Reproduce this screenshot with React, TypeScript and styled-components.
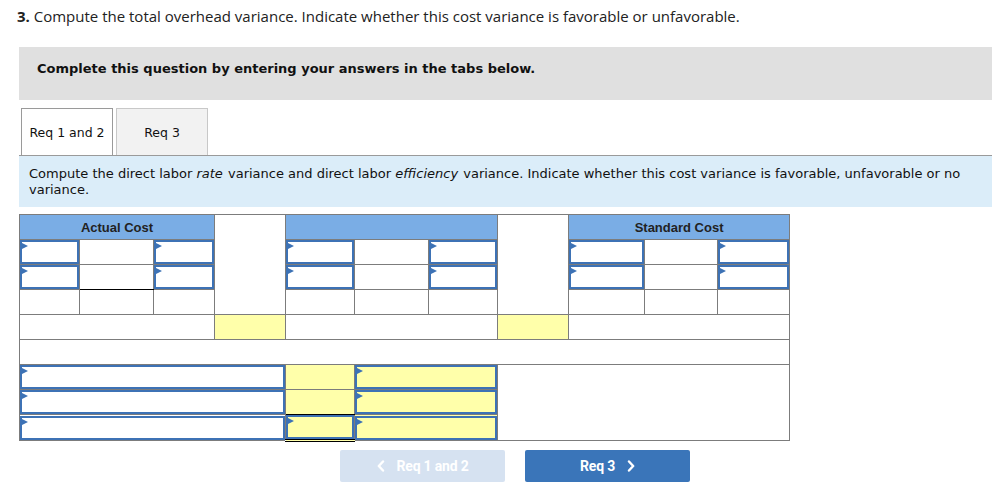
import React from 'react';
import styled, { createGlobalStyle } from 'styled-components';

const Global = createGlobalStyle`
  html, body { margin: 0; padding: 0; background: #fff; }
  body { font-family: 'DejaVu Sans', Verdana, sans-serif; color: #111; }
`;

const Page = styled.div`
  width: 992px;
  padding-top: 7px;
  box-sizing: border-box;
`;

const Title = styled.div`
  margin-left: 17px;
  font-family: 'Open Sans', 'Liberation Sans', sans-serif;
  font-size: 15px;
  line-height: 18px;
  color: #222;
  b { font-weight: 700; }
`;

const Banner = styled.div`
  margin: 22px 0 0 19px;
  height: 53px;
  box-sizing: border-box;
  background: #e0e0e0;
  padding: 14px 0 0 18px;
  font-weight: 700;
  font-size: 13px;
  line-height: 16px;
  color: #111;
`;

const TabBar = styled.div`
  margin: 8px 0 0 19px;
  padding-left: 2px;
  display: flex;
  gap: 3px;
  border-bottom: 1px solid #9a9a9a;
`;

const Tab = styled.div<{ $active?: boolean }>`
  width: 92px;
  height: 47px;
  box-sizing: border-box;
  display: flex;
  align-items: center;
  justify-content: center;
  font-size: 12.5px;
  color: #111;
  background: ${p => (p.$active ? '#fff' : '#f2f2f2')};
  border: 1px solid ${p => (p.$active ? '#9a9a9a' : '#c8c8c8')};
  border-bottom: none;
`;

const Instructions = styled.div`
  margin-left: 19px;
  background: #dbedf9;
  padding: 10px 20px 9px 10px;
  font-size: 13px;
  line-height: 16px;
  color: #111;
  i { padding-right: 1px; }
`;

const Table = styled.table`
  margin: 7px 0 0 19px;
  border-collapse: collapse;
  table-layout: fixed;
  width: 771px;
`;

const Td = styled.td<{ $tone?: 'plain' | 'head' | 'yellow'; $under?: 'single' | 'double' }>`
  height: 24px;
  padding: 0;
  border: 1px solid #7c7c7c;
  background: ${p => (p.$tone === 'head' ? '#7aade5' : p.$tone === 'yellow' ? '#ffffaa' : '#fff')};
  font-family: 'Liberation Sans', Arial, sans-serif;
  font-weight: 700;
  font-size: 13px;
  color: #222;
  text-align: center;
  vertical-align: middle;
  ${p => (p.$under === 'single' ? 'border-bottom: 1px solid #000;' : '')}
  ${p => (p.$under === 'double' ? 'border-bottom: 3px double #000;' : '')}
`;

const InputBox = styled.div<{ $yellow?: boolean }>`
  position: relative;
  height: 24px;
  box-sizing: border-box;
  border: 2px solid #3d72b5;
  background: ${p => (p.$yellow ? '#ffffaa' : '#fff')};
`;

const Marker = styled.span`
  position: absolute;
  left: 0;
  top: 1px;
  width: 0;
  height: 0;
  border-left: 6px solid #3d72b5;
  border-top: 3.5px solid transparent;
  border-bottom: 3.5px solid transparent;
`;

const Input = ({ yellow }: { yellow?: boolean }) => (
  <InputBox $yellow={yellow}>
    <Marker />
  </InputBox>
);

const Nav = styled.div`
  margin: 8px 0 0 340px;
  display: flex;
  gap: 20px;
`;

const NavButton = styled.button<{ $disabled?: boolean }>`
  width: 165px;
  height: 32px;
  border: none;
  border-radius: 2px;
  background: ${p => (p.$disabled ? '#d6e2f1' : '#3a75b9')};
  color: #fff;
  font-family: Roboto, 'Liberation Sans', sans-serif;
  font-weight: 700;
  font-size: 14px;
  letter-spacing: -0.2px;
  display: flex;
  align-items: center;
  justify-content: center;
  gap: 12px;
  padding: 0;
  cursor: pointer;
`;

const Chevron = ({ dir }: { dir: 'left' | 'right' }) => (
  <svg width="8" height="12" viewBox="0 0 8 12">
    <polyline
      points={dir === 'left' ? '6,1.5 1.8,6 6,10.5' : '2,1.5 6.2,6 2,10.5'}
      fill="none"
      stroke="#fff"
      strokeWidth="2.4"
      strokeLinecap="round"
      strokeLinejoin="round"
    />
  </svg>
);

const widths = [60, 74, 61, 71, 69, 74, 69, 71, 76, 73, 72];

export default function App() {
  return (
    <Page>
      <Global />
      <Title>
        <b>3.</b> Compute the total overhead variance. Indicate whether this cost variance is favorable or unfavorable.
      </Title>
      <Banner>Complete this question by entering your answers in the tabs below.</Banner>
      <TabBar>
        <Tab $active>Req 1 and 2</Tab>
        <Tab>Req 3</Tab>
      </TabBar>
      <Instructions>
        Compute the direct labor <i>rate</i> variance and direct labor <i>efficiency</i> variance. Indicate whether this cost
        variance is favorable, unfavorable or no variance.
      </Instructions>
      <Table>
        <colgroup>
          {widths.map((w, i) => (
            <col key={i} style={{ width: w }} />
          ))}
        </colgroup>
        <tbody>
          <tr>
            <Td $tone="head" colSpan={3}>Actual Cost</Td>
            <Td rowSpan={4} />
            <Td $tone="head" colSpan={3} />
            <Td rowSpan={4} />
            <Td $tone="head" colSpan={3}>Standard Cost</Td>
          </tr>
          {[0, 1].map(r => (
            <tr key={r}>
              <Td><Input /></Td>
              <Td $under={r === 1 ? 'single' : undefined} />
              <Td><Input /></Td>
              <Td><Input /></Td>
              <Td />
              <Td><Input /></Td>
              <Td><Input /></Td>
              <Td />
              <Td><Input /></Td>
            </tr>
          ))}
          <tr>
            {[0, 1, 2, 3, 4, 5, 6, 7, 8].map(i => (
              <Td key={i} />
            ))}
          </tr>
          <tr>
            <Td colSpan={3} />
            <Td $tone="yellow" />
            <Td colSpan={3} />
            <Td $tone="yellow" />
            <Td colSpan={3} />
          </tr>
          <tr>
            <Td colSpan={11} />
          </tr>
          <tr>
            <Td colSpan={4}><Input /></Td>
            <Td $tone="yellow" />
            <Td colSpan={2} $tone="yellow"><Input yellow /></Td>
            <Td colSpan={4} rowSpan={3} />
          </tr>
          <tr>
            <Td colSpan={4}><Input /></Td>
            <Td $tone="yellow" $under="single" />
            <Td colSpan={2} $tone="yellow"><Input yellow /></Td>
          </tr>
          <tr>
            <Td colSpan={4}><Input /></Td>
            <Td $tone="yellow" $under="double"><Input yellow /></Td>
            <Td colSpan={2} $tone="yellow"><Input yellow /></Td>
          </tr>
        </tbody>
      </Table>
      <Nav>
        <NavButton $disabled>
          <Chevron dir="left" />
          Req 1 and 2
        </NavButton>
        <NavButton>
          Req 3
          <Chevron dir="right" />
        </NavButton>
      </Nav>
    </Page>
  );
}
